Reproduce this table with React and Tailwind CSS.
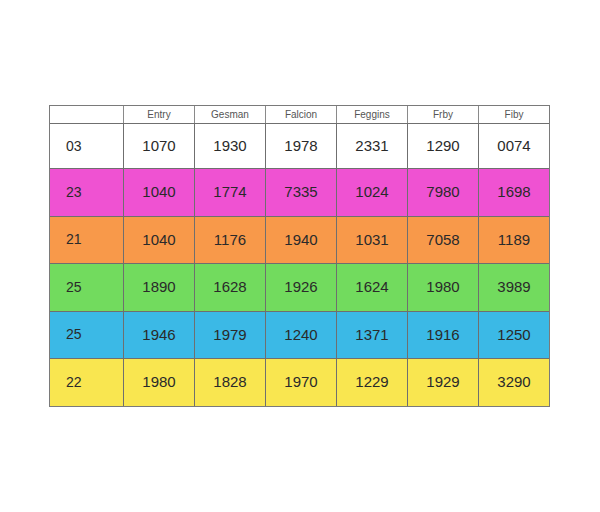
import React from "react";

const headers = ["", "Entry", "Gesman", "Falcion", "Feggins", "Frby", "Fiby"];

const rows = [
  { bg: "bg-white", cells: ["03", "1070", "1930", "1978", "2331", "1290", "0074"] },
  { bg: "bg-[#ef52d2]", cells: ["23", "1040", "1774", "7335", "1024", "7980", "1698"] },
  { bg: "bg-[#f8994a]", cells: ["21", "1040", "1176", "1940", "1031", "7058", "1189"] },
  { bg: "bg-[#72db5e]", cells: ["25", "1890", "1628", "1926", "1624", "1980", "3989"] },
  { bg: "bg-[#3bb9e6]", cells: ["25", "1946", "1979", "1240", "1371", "1916", "1250"] },
  { bg: "bg-[#f9e650]", cells: ["22", "1980", "1828", "1970", "1229", "1929", "3290"] },
];

const cols = "grid grid-cols-[73px_71px_71px_71px_71px_71px_71px]";

export default function App() {
  return (
    <div
      className="w-[600px] h-[512px] bg-white pt-[105px] pl-[49px]"
      style={{ fontFamily: "'Liberation Sans', Arial, sans-serif" }}
    >
      <div className="w-[501px] border border-[#7a7a7a]">
        <div className={`${cols} h-[17px] bg-white`}>
          {headers.map((h, i) => (
            <div
              key={i}
              className={`flex items-center justify-center text-[10px] text-[#555] ${i > 0 ? "border-l border-[#8a8a8a]" : ""}`}
            >
              {h}
            </div>
          ))}
        </div>
        {rows.map((r, ri) => (
          <div
            key={ri}
            className={`${cols} ${ri === 0 ? "h-[45px]" : "h-[47.5px]"} ${r.bg} border-t border-[#6f6f6f]`}
          >
            {r.cells.map((c, ci) => (
              <div
                key={ci}
                className={`flex items-center text-[#2a2a2a] ${ci === 0 ? "pl-[16px] text-[14px]" : "justify-center text-[15px] border-l border-[#6f6f6f]"}`}
              >
                {c}
              </div>
            ))}
          </div>
        ))}
      </div>
    </div>
  );
}
